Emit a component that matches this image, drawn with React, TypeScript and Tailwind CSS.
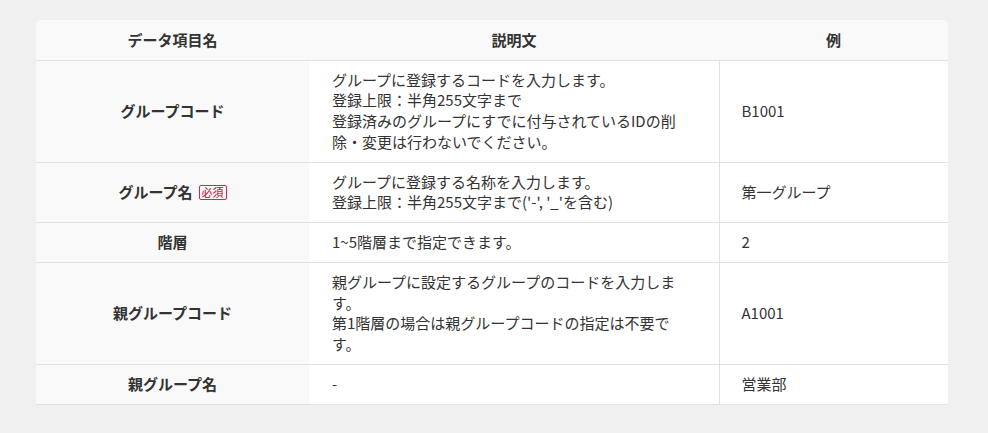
import React from "react";

type Row = {
  name: string;
  required?: boolean;
  desc: string[];
  example: string;
};

const rows: Row[] = [
  {
    name: "グループコード",
    desc: [
      "グループに登録するコードを入力します。",
      "登録上限：半角255文字まで",
      "登録済みのグループにすでに付与されているIDの削除・変更は行わないでください。",
    ],
    example: "B1001",
  },
  {
    name: "グループ名",
    required: true,
    desc: ["グループに登録する名称を入力します。", "登録上限：半角255文字まで('-', '_'を含む)"],
    example: "第一グループ",
  },
  { name: "階層", desc: ["1~5階層まで指定できます。"], example: "2" },
  {
    name: "親グループコード",
    desc: [
      "親グループに設定するグループのコードを入力します。",
      "第1階層の場合は親グループコードの指定は不要です。",
    ],
    example: "A1001",
  },
  { name: "親グループ名", desc: ["-"], example: "営業部" },
];

export default function App() {
  return (
    <div
      className="min-h-[433px] w-full bg-[#f0f0f0] pt-5 pl-9 pr-10 text-[15px] text-[#333]"
      style={{ fontFamily: '"Noto Sans CJK JP", "Noto Sans", sans-serif' }}
    >
      <table className="w-[912px] table-fixed border-collapse overflow-hidden rounded-t-[4px]">
        <colgroup>
          <col className="w-[273px]" />
          <col className="w-[410px]" />
          <col className="w-[229px]" />
        </colgroup>
        <thead>
          <tr className="h-[40px] border-b border-[#e2e2e2] bg-[#f9f9f9] leading-[20px]">
            <th className="rounded-tl-[4px] text-center font-bold">データ項目名</th>
            <th className="text-center font-bold">説明文</th>
            <th className="rounded-tr-[4px] text-center font-bold">例</th>
          </tr>
        </thead>
        <tbody className="leading-[20.75px]">
          {rows.map((r) => (
            <tr key={r.name} className="border-b border-[#e2e2e2]">
              <td className="bg-[#f9f9f9] py-[9px] text-center align-middle font-bold">
                <span className="inline-flex items-center gap-[6px]">
                  {r.name}
                  {r.required && (
                    <span className="rounded-[2px] border border-[#dc1f4c] bg-white px-[2px] text-[11px] leading-[13px] font-medium text-[#dc1f4c]">
                      必須
                    </span>
                  )}
                </span>
              </td>
              <td className="bg-white py-[9px] pr-[34px] pl-[23px] align-middle">
                {r.desc.map((d, i) => (
                  <div key={i}>{d}</div>
                ))}
              </td>
              <td className="border-l border-[#e2e2e2] bg-white py-[9px] pl-[22px] align-middle">
                {r.example}
              </td>
            </tr>
          ))}
        </tbody>
      </table>
    </div>
  );
}
